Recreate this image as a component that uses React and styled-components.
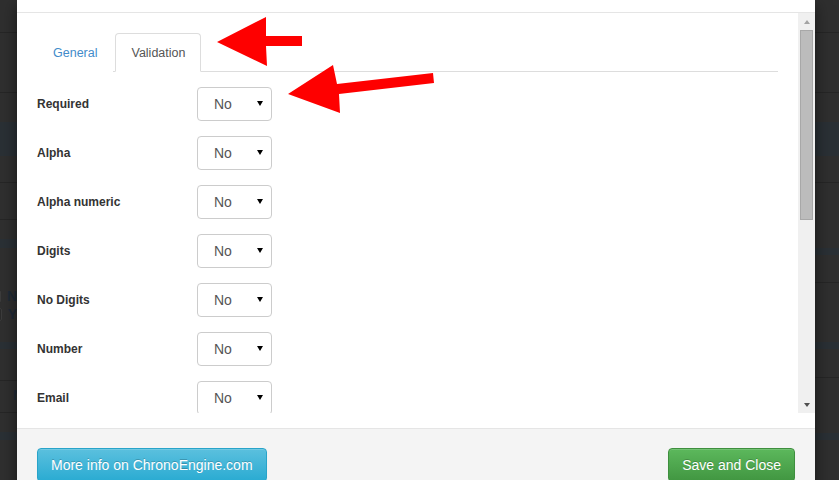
import React from "react";
import styled, { createGlobalStyle } from "styled-components";

const GlobalStyle = createGlobalStyle`
  html, body {
    margin: 0;
    padding: 0;
    overflow: hidden;
    background: #2f2f2f;
  }
  body {
    font-family: "Liberation Sans", Arial, sans-serif;
  }
`;

const Page = styled.div`
  position: relative;
  width: 839px;
  height: 480px;
  overflow: hidden;
  background: #2f2f2f;
  display: flex;
  justify-content: space-between;
`;

const Strip = styled.div`
  display: flex;
  flex-direction: column;
  width: ${({ w }) => w}px;
`;

const Seg = styled.div`
  height: ${({ h }) => h}px;
  flex-shrink: 0;
  background: ${({ kind }) =>
    kind === "line" ? "#262626" : kind === "band" ? "#2a3035" : "#2f2f2f"};
  display: flex;
  align-items: center;
  gap: 6px;
  font-size: 14px;
  font-weight: bold;
  color: #1f2a36;
  overflow: hidden;
  white-space: nowrap;
`;

const BgCheck = styled.span`
  width: 11px;
  height: 11px;
  margin-left: -5px;
  border: 1px solid #3c3c3c;
  border-radius: 2px;
  background: #2b2b2b;
`;

const BgText = styled.span`
  margin-left: ${({ ml }) => ml || 0}px;
`;

const Modal = styled.div`
  position: absolute;
  top: 0;
  left: 17px;
  width: 798px;
  height: 520px;
  background: #fff;
  box-shadow: 0 5px 15px rgba(0, 0, 0, 0.5);
  display: flex;
  flex-direction: column;
`;

const ModalHeader = styled.div`
  height: 12px;
  border-bottom: 1px solid #e5e5e5;
`;

const ModalBody = styled.div`
  padding-bottom: 15px;
  border-bottom: 1px solid #e5e5e5;
`;

const ScrollArea = styled.div`
  display: flex;
  height: 400px;
`;

const ScrollContent = styled.div`
  flex: 1;
  overflow: hidden;
  padding: 20px 20px 0;
`;

const Track = styled.div`
  width: 17px;
  background: #f0f0f0;
  display: flex;
  flex-direction: column;
  align-items: center;
`;

const TrackButton = styled.div`
  height: 17px;
  width: 17px;
  display: flex;
  align-items: center;
  justify-content: center;
  &::after {
    content: "";
    width: 0;
    height: 0;
    border-left: 3.5px solid transparent;
    border-right: 3.5px solid transparent;
    ${({ dir, color }) =>
      dir === "up"
        ? `border-bottom: 4px solid ${color};`
        : `border-top: 4px solid ${color};`}
  }
`;

const Thumb = styled.div`
  width: 13px;
  height: 190px;
  box-sizing: border-box;
  background: #bcbcbc;
  border: 1px solid #a8a8a8;
`;

const TrackFill = styled.div`
  flex: 1;
`;

const Tabs = styled.ul`
  list-style: none;
  margin: 0;
  padding: 0;
  display: flex;
  border-bottom: 1px solid #ddd;
`;

const Tab = styled.li`
  margin-right: 2px;
  margin-bottom: -1px;
  padding: 11px 15px 9px;
  font-size: 12.5px;
  line-height: 17px;
  border: 1px solid ${({ active }) => (active ? "#ddd" : "transparent")};
  border-bottom-color: ${({ active }) => (active ? "#fff" : "transparent")};
  border-radius: 4px 4px 0 0;
  background: #fff;
  color: ${({ active }) => (active ? "#555" : "#428bca")};
`;

const Row = styled.div`
  display: flex;
  align-items: center;
  height: 34px;
  margin-top: 15px;
`;

const Label = styled.label`
  width: 160px;
  flex-shrink: 0;
  margin-top: -1px;
  font-size: 12px;
  font-weight: bold;
  color: #333;
`;

const Select = styled.div`
  width: 75px;
  height: 34px;
  box-sizing: border-box;
  border: 1px solid #ccc;
  border-radius: 4px;
  padding: 0 8px 0 16px;
  display: flex;
  align-items: center;
  justify-content: space-between;
  font-size: 14px;
  color: #555;
  &::after {
    content: "";
    width: 0;
    height: 0;
    margin-top: -2px;
    border-left: 3px solid transparent;
    border-right: 3px solid transparent;
    border-top: 5px solid #000;
  }
`;

const Footer = styled.div`
  flex: 1;
  background: #f4f4f4;
  padding: 19px 20px;
  display: flex;
  justify-content: space-between;
  align-items: flex-start;
`;

const Button = styled.button`
  font-family: "Liberation Sans", Arial, sans-serif;
  font-size: 14px;
  line-height: 20px;
  padding: 6px 13px;
  border-radius: 4px;
  color: #fff;
  text-shadow: 0 -1px 0 rgba(0, 0, 0, 0.2);
  box-shadow: inset 0 1px 0 rgba(255, 255, 255, 0.15), 0 1px 1px rgba(0, 0, 0, 0.075);
  border: 1px solid ${({ variant }) => (variant === "success" ? "#3e8f3e" : "#28a4c9")};
  background: ${({ variant }) =>
    variant === "success"
      ? "linear-gradient(to bottom, #5cb85c 0, #419641 100%)"
      : "linear-gradient(to bottom, #5bc0de 0, #2aabd2 100%)"};
`;

const Marks = styled.svg`
  position: absolute;
  left: 0;
  top: 0;
  pointer-events: none;
`;

const leftSegs = [
  { h: 32 }, { h: 1, kind: "line" }, { h: 59 }, { h: 1, kind: "line" },
  { h: 29 }, { h: 34, kind: "band" }, { h: 26 }, { h: 1, kind: "line" },
  { h: 36 }, { h: 1, kind: "line" }, { h: 19 }, { h: 9, kind: "band" },
  { h: 39 }, { h: 18, check: "N" }, { h: 18, check: "Y" }, { h: 19 },
  { h: 7, kind: "band" }, { h: 31 }, { h: 1, kind: "line" }, { h: 7 },
  { h: 14, text: "N" }, { h: 10 }, { h: 1, kind: "line" }, { h: 19 },
  { h: 8, kind: "band" }, { h: 40 },
];

const rightSegs = [
  { h: 32 }, { h: 1, kind: "line" }, { h: 59 }, { h: 1, kind: "line" },
  { h: 29 }, { h: 34, kind: "band" }, { h: 26 }, { h: 1, kind: "line" },
  { h: 65 }, { h: 7, kind: "band" }, { h: 27 }, { h: 1, kind: "line" },
  { h: 59 }, { h: 7, kind: "band" }, { h: 28 }, { h: 1, kind: "line" },
  { h: 55 }, { h: 7, kind: "band" }, { h: 40 },
];

const rules = [
  "Required",
  "Alpha",
  "Alpha numeric",
  "Digits",
  "No Digits",
  "Number",
  "Email",
  "Url",
];

function Backdrop({ segs, w }) {
  return (
    <Strip w={w}>
      {segs.map((s, i) => (
        <Seg key={i} h={s.h} kind={s.kind}>
          {s.check && (
            <>
              <BgCheck />
              <BgText>{s.check}</BgText>
            </>
          )}
          {s.text && <BgText ml={13}>{s.text}</BgText>}
        </Seg>
      ))}
    </Strip>
  );
}

export default function App() {
  return (
    <>
      <GlobalStyle />
      <Page>
        <Backdrop segs={leftSegs} w={17} />
        <Backdrop segs={rightSegs} w={24} />

        <Modal>
          <ModalHeader />
          <ModalBody>
            <ScrollArea>
              <ScrollContent>
                <Tabs>
                  <Tab>General</Tab>
                  <Tab active>Validation</Tab>
                </Tabs>
                {rules.map((r) => (
                  <Row key={r}>
                    <Label>{r}</Label>
                    <Select>No</Select>
                  </Row>
                ))}
              </ScrollContent>
              <Track>
                <TrackButton dir="up" color="#a3a3a3" />
                <Thumb />
                <TrackFill />
                <TrackButton dir="down" color="#505050" />
              </Track>
            </ScrollArea>
          </ModalBody>
          <Footer>
            <Button>More info on ChronoEngine.com</Button>
            <Button variant="success">Save and Close</Button>
          </Footer>
        </Modal>

        <Marks width="839" height="480" viewBox="0 0 839 480">
          <polygon
            fill="#fe0000"
            points="217,42 266,17 266,36 302,36 302,46 266,46 267,66"
          />
          <polygon
            fill="#fe0000"
            points="288,94 333,65 337,84 433,73 434,83 339,94 340,113"
          />
        </Marks>
      </Page>
    </>
  );
}
